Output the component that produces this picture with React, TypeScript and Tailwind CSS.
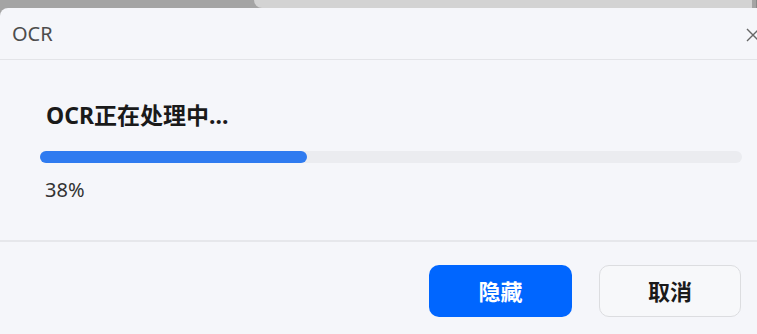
const App = () => {
  const progress = 38;
  return (
    <div
      className="w-[757px] h-[334px] overflow-hidden bg-[#a4a4a4] flex flex-col"
      style={{ fontFamily: '"Noto Sans", "Noto Sans CJK SC", sans-serif' }}
    >
      {/* background behind the dialog */}
      <div className="flex h-[8px] shrink-0">
        <div className="w-[254px] bg-[#a4a4a4]" />
        <div className="flex-1 bg-[#d3d3d3] rounded-bl-[8px] mr-[4px]" />
        <div className="w-[1px] bg-[#8a8a8a]" />
      </div>

      <div className="flex-1 flex flex-col bg-[#f5f6fa] rounded-tl-[8px]">
        {/* header */}
        <div className="h-[52px] flex items-center justify-between pl-[12px] border-b border-[#e3e4e8] shrink-0">
          <span className="text-[20px] text-[#4d4d4d] leading-none">OCR</span>
          <svg width="16" height="16" viewBox="0 0 16 16" className="-mr-[4px] mt-[2px]">
            <path d="M2 2 L14 14 M14 2 L2 14" stroke="#666" strokeWidth="1.4" fill="none" />
          </svg>
        </div>

        {/* body */}
        <div className="h-[182px] flex flex-col pl-[40px] pr-[15px] border-b-2 border-[#e6e7eb] shrink-0">
          <div className="mt-[40px] pl-[6px] text-[23px] font-bold text-[#1a1a1a] leading-[30px]">
            OCR正在处理中...
          </div>
          <div className="mt-[21px] h-[12px] rounded-full bg-[#ebecf0]">
            <div className="h-full rounded-full bg-[#2f7bf0]" style={{ width: `${progress}%` }} />
          </div>
          <div className="mt-[14px] pl-[5px] text-[20px] text-[#333] leading-[26px]">{progress}%</div>
        </div>

        {/* footer */}
        <div className="flex justify-end gap-[27px] pr-[16px] pt-[23px]">
          <button className="w-[143px] h-[52px] rounded-[10px] bg-[#0066ff] text-white text-[22px] font-bold">
            隐藏
          </button>
          <button className="w-[142px] h-[52px] rounded-[10px] bg-[#f7f8fa] border border-[#dcdde0] text-[#1a1a1a] text-[22px] font-bold">
            取消
          </button>
        </div>
      </div>
    </div>
  );
};

export default App;
